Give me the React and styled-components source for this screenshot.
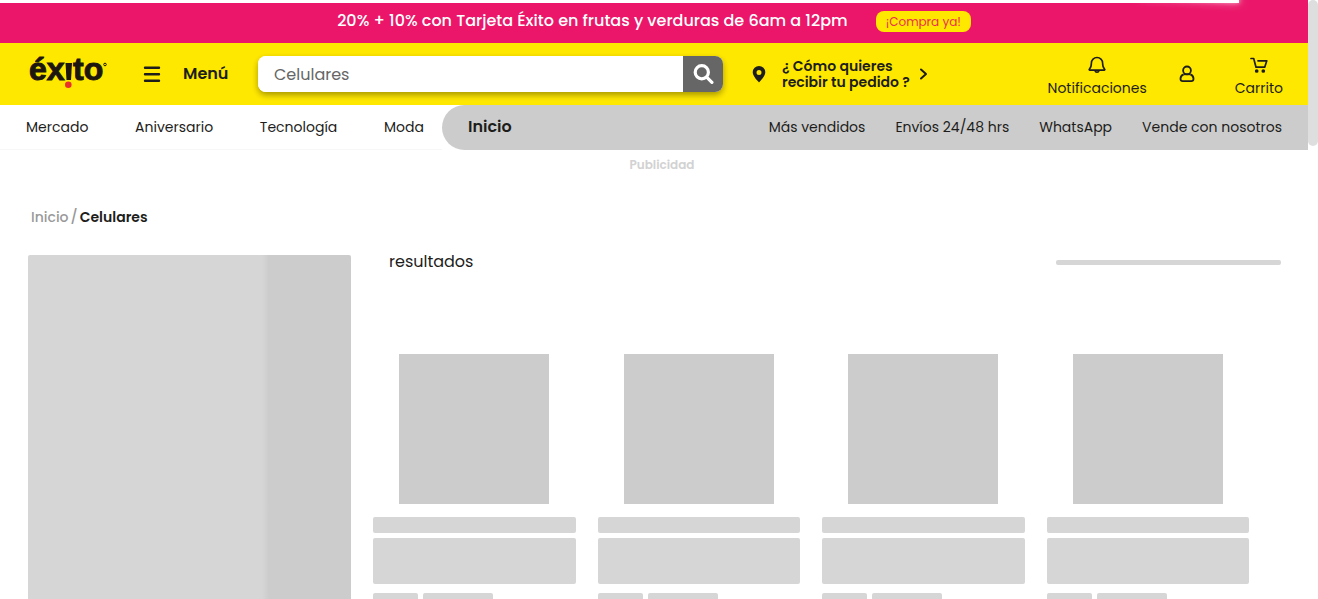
import React from "react";
import styled, { createGlobalStyle } from "styled-components";

const GlobalStyle = createGlobalStyle`
  *, *::before, *::after { box-sizing: border-box; }
  html { scrollbar-width: none; }
  html::-webkit-scrollbar { display: none; }
  body {
    margin: 0;
    background: #fff;
    color: #1d1d1b;
    font-family: Poppins, Inter, "Open Sans", sans-serif;
    font-size: 14px;
    line-height: 20px;
  }
  a { color: inherit; text-decoration: none; }
  button, input { font: inherit; color: inherit; }
  button { border: 0; padding: 0; background: none; cursor: pointer; }
`;

const Page = styled.div`
  padding-right: 10px;
`;

const LoadingBar = styled.div`
  position: fixed;
  top: 0;
  left: 0;
  z-index: 3;
  width: 94%;
  height: 3px;
  background: #fff;

  &::after {
    content: "";
    position: absolute;
    right: 0;
    top: 0;
    width: 100px;
    height: 100%;
    box-shadow: 0 0 10px #fff, 0 0 5px #fff;
    transform: rotate(3deg) translate(0, -4px);
  }
`;

const ScrollThumb = styled.div`
  position: fixed;
  top: 0;
  right: 0;
  z-index: 3;
  width: 10px;
  height: 146px;
  border-radius: 5px;
  background: #dedede;
`;

const Promo = styled.div`
  display: flex;
  justify-content: center;
  align-items: center;
  gap: 28px;
  height: 43px;
  background: #eb1669;
  color: #fff;
`;

const PromoText = styled.span`
  padding-bottom: 2px;
  font-size: 16px;
  font-weight: 500;
`;

const PromoLink = styled.a`
  padding: 0 10px;
  border-radius: 8px;
  background: #ffe800;
  color: #eb3050;
  font-size: 12px;
  line-height: 21px;
`;

const Header = styled.header`
  display: flex;
  align-items: center;
  height: 62px;
  padding: 0 25px 0 30px;
  background: #ffe800;
`;

const LogoLink = styled.a`
  display: block;
  width: 78px;
  height: 34px;
  margin-bottom: 4px;
  svg { display: block; overflow: visible; }
`;

const MenuButton = styled.button`
  display: flex;
  align-items: center;
  gap: 22px;
  width: 115px;
  margin-left: 35px;
  font-size: 16px;
  font-weight: 600;
  svg { flex: none; }
`;

const Search = styled.form`
  display: flex;
  flex: 0 1 465px;
  height: 36px;
  border-radius: 8px;
  overflow: hidden;
  background: #fff;
  box-shadow: 0 3px 6px rgba(0, 0, 0, 0.35);
`;

const SearchInput = styled.input`
  flex: 1;
  min-width: 0;
  padding: 1px 16px 0;
  border: 0;
  outline: 0;
  background: #fff;
  color: #666;
  font-size: 16px;
`;

const SearchButton = styled.button`
  display: grid;
  place-items: center;
  flex: none;
  width: 40px;
  background: #666;
`;

const Delivery = styled.button`
  display: flex;
  align-items: center;
  margin-left: 29px;
  font-size: 14px;
  font-weight: 600;
  line-height: 16px;
  text-align: left;
`;

const DeliveryText = styled.span`
  display: flex;
  flex-direction: column;
  width: 137px;
  margin-left: 16px;
  white-space: nowrap;
`;

const Actions = styled.div`
  display: flex;
  align-items: center;
  gap: 32px;
  margin-left: auto;
`;

const Action = styled.a`
  display: flex;
  flex-direction: column;
  align-items: center;
  gap: 4px;
  svg { display: block; }
  &:not([aria-label]) { padding-top: 6px; }
  &:last-child { margin-left: 8px; }
`;

const Nav = styled.nav`
  display: flex;
  height: 45px;
  line-height: 44px;
  white-space: nowrap;
`;

const Categories = styled.div`
  display: flex;
  justify-content: space-between;
  flex: 0 0 442px;
  padding: 0 18px 0 26px;
  border-bottom: 1px solid #f7f7f7;
`;

const Shortcuts = styled.div`
  display: flex;
  flex: 1;
  gap: 30px;
  padding: 0 26px;
  border-radius: 23px 0 0 23px;
  background: #ccc;
`;

const Current = styled.a`
  margin-right: auto;
  font-size: 16px;
  font-weight: 600;
`;

const AdLabel = styled.p`
  margin: 5px 0 0;
  padding-left: 16px;
  color: #d2d2d2;
  font-size: 12px;
  font-weight: 600;
  text-align: center;
`;

const Breadcrumb = styled.nav`
  display: flex;
  gap: 2px;
  margin: 32px 0 28px 31px;
  color: #999;
  font-size: 14px;
  font-weight: 500;
  a:last-child { color: #1d1d1b; font-weight: 600; }
`;

const Content = styled.main`
  display: flex;
  gap: 22px;
  padding: 0 27px 0 28px;
`;

const FilterSkeleton = styled.aside`
  flex: 0 0 26%;
  max-width: 323px;
  height: 900px;
  border-radius: 2px;
  background: linear-gradient(90deg, #d6d6d6 234px, #ccc 241px);
`;

const Results = styled.section`
  flex: 1;
  min-width: 0;
`;

const ResultsHead = styled.div`
  display: flex;
  justify-content: space-between;
  padding-left: 16px;
`;

const ResultsTitle = styled.h1`
  margin: 0;
  font-size: 16px;
  font-weight: 400;
  line-height: 13px;
`;

const Bone = styled.div`
  width: ${(p) => p.$width || "100%"};
  height: ${(p) => p.$height};
  border-radius: 2px;
  background: #d6d6d6;
`;

const SortBone = styled(Bone)`
  margin-top: 5px;
`;

const Cards = styled.div`
  display: grid;
  grid-template-columns: repeat(4, 1fr);
  gap: 22px;
  margin-top: 86px;
  padding-right: 32px;
`;

const Card = styled.article`
  display: flex;
  flex-direction: column;
  gap: 5px;
`;

const ImageBone = styled.div`
  align-self: center;
  width: 150px;
  height: 150px;
  margin-bottom: 8px;
  background: #ccc;
`;

const PriceRow = styled.div`
  display: flex;
  gap: 5px;
  margin-top: 4px;
`;

const Logo = () => (
  <svg width="78" height="34" viewBox="0 0 78 34" aria-label="éxito" fill="#1d160f">
    <g
      fontFamily="'Liberation Sans', Arial, sans-serif"
      fontSize="32"
      fontWeight="700"
      stroke="#1d160f"
      strokeWidth="1"
    >
      <text x="-1" y="25">éx</text>
      <text x="43" y="25">to</text>
    </g>
    <path d="M35.500 8h6.500l-1 17h-4.500z" />
    <circle cx="38.300" cy="29.800" r="3.300" fill="#e9312b" />
    <circle cx="75" cy="9.500" r="1.300" fill="none" stroke="#1d160f" />
  </svg>
);

const MenuIcon = () => (
  <svg width="18" height="18" viewBox="0 0 18 18" fill="none" stroke="#1d1d1b" strokeWidth="2.4" strokeLinecap="round">
    <path d="M2 2.800h14M2 9.300h14M2 15.800h14" />
  </svg>
);

const SearchIcon = () => (
  <svg width="22" height="22" viewBox="0 0 22 22" fill="none" stroke="#fff" strokeWidth="3.200" strokeLinecap="round">
    <circle cx="9.800" cy="9.200" r="6.600" />
    <path d="M14.900 14.400l5 5" />
  </svg>
);

const PinIcon = () => (
  <svg width="14" height="18" viewBox="0 0 14 18" fill="#1d1d1b">
    <path fillRule="evenodd" d="M7 1a6.300 6.300 0 0 0-6.300 6.300C.7 11.500 7 17.400 7 17.400s6.300-5.900 6.300-10.100A6.300 6.300 0 0 0 7 1zm0 3.900a2.500 2.500 0 1 1 0 5 2.500 2.500 0 0 1 0-5z" />
  </svg>
);

const ChevronIcon = () => (
  <svg width="9" height="12" viewBox="0 0 9 12" fill="none" stroke="#1d1d1b" strokeWidth="2" strokeLinecap="round" strokeLinejoin="round">
    <path d="M2 1.500l5 4.500-5 4.500" />
  </svg>
);

const BellIcon = () => (
  <svg width="18" height="18" viewBox="0 0 18 18" fill="none" stroke="#1d1d1b" strokeWidth="1.600" strokeLinejoin="round">
    <path d="M9 1.500a5.600 5.600 0 0 0-5.600 5.600c0 3.400-.5 4.700-2 5.900-.5.500-.2 1.100.4 1.100h14.400c.6 0 .9-.6.4-1.100-1.500-1.200-2-2.500-2-5.900A5.600 5.600 0 0 0 9 1.500zM6.800 14.300c.4 1.500 1.200 2 2.200 2s1.800-.5 2.200-2" />
  </svg>
);

const UserIcon = () => (
  <svg width="16" height="18" viewBox="0 0 16 18" fill="none" stroke="#1d1d1b" strokeWidth="1.800">
    <circle cx="8" cy="5.400" r="3.900" />
    <path d="M4.600 9.300C2.700 10 1.500 11.500 1.500 13.800c0 1.800.6 2.400 2.300 2.400h8.400c1.700 0 2.300-.6 2.300-2.400 0-2.300-1.200-3.800-3.100-4.500" />
    <path d="M4.600 9.300h6.800" />
  </svg>
);

const CartIcon = () => (
  <svg width="20" height="18" viewBox="0 0 20 18" fill="none" stroke="#1d1d1b" strokeWidth="1.700" strokeLinecap="round" strokeLinejoin="round">
    <path d="M2 2.500h2.700L7 11.200h8.700L17.800 4.800H9" />
    <circle cx="7.700" cy="15" r="1" fill="#1d1d1b" />
    <circle cx="14.300" cy="15" r="1" fill="#1d1d1b" />
  </svg>
);

const categories = ["Mercado", "Aniversario", "Tecnología", "Moda"];
const shortcuts = ["Más vendidos", "Envíos 24/48 hrs", "WhatsApp", "Vende con nosotros"];

export default function App() {
  return (
    <>
      <GlobalStyle />
      <LoadingBar />
      <ScrollThumb />
      <Page>
        <Promo>
          <PromoText>20% + 10% con Tarjeta Éxito en frutas y verduras de 6am a 12pm</PromoText>
          <PromoLink href="#promo">¡Compra ya!</PromoLink>
        </Promo>
        <Header>
          <LogoLink href="#inicio"><Logo /></LogoLink>
          <MenuButton type="button"><MenuIcon />Menú</MenuButton>
          <Search onSubmit={(e) => e.preventDefault()}>
            <SearchInput aria-label="Buscar" defaultValue="Celulares" />
            <SearchButton type="submit" aria-label="Buscar"><SearchIcon /></SearchButton>
          </Search>
          <Delivery type="button">
            <PinIcon />
            <DeliveryText>
              <span>¿ Cómo quieres</span>
              <span>recibir tu pedido ?</span>
            </DeliveryText>
            <ChevronIcon />
          </Delivery>
          <Actions>
            <Action href="#notificaciones"><BellIcon />Notificaciones</Action>
            <Action href="#cuenta" aria-label="Mi cuenta"><UserIcon /></Action>
            <Action href="#carrito"><CartIcon />Carrito</Action>
          </Actions>
        </Header>
        <Nav>
          <Categories>
            {categories.map((name) => <a key={name} href="#categoria">{name}</a>)}
          </Categories>
          <Shortcuts>
            <Current href="#inicio">Inicio</Current>
            {shortcuts.map((name) => <a key={name} href="#enlace">{name}</a>)}
          </Shortcuts>
        </Nav>
        <AdLabel>Publicidad</AdLabel>
        <Breadcrumb aria-label="Ruta">
          <a href="#inicio">Inicio</a>
          <span>/</span>
          <a href="#celulares">Celulares</a>
        </Breadcrumb>
        <Content>
          <FilterSkeleton />
          <Results>
            <ResultsHead>
              <ResultsTitle>resultados</ResultsTitle>
              <SortBone $width="225px" $height="5px" />
            </ResultsHead>
            <Cards>
              {[0, 1, 2, 3].map((n) => (
                <Card key={n}>
                  <ImageBone />
                  <Bone $height="16px" />
                  <Bone $height="46px" />
                  <PriceRow>
                    <Bone $width="45px" $height="16px" />
                    <Bone $width="70px" $height="16px" />
                  </PriceRow>
                </Card>
              ))}
            </Cards>
          </Results>
        </Content>
      </Page>
    </>
  );
}
